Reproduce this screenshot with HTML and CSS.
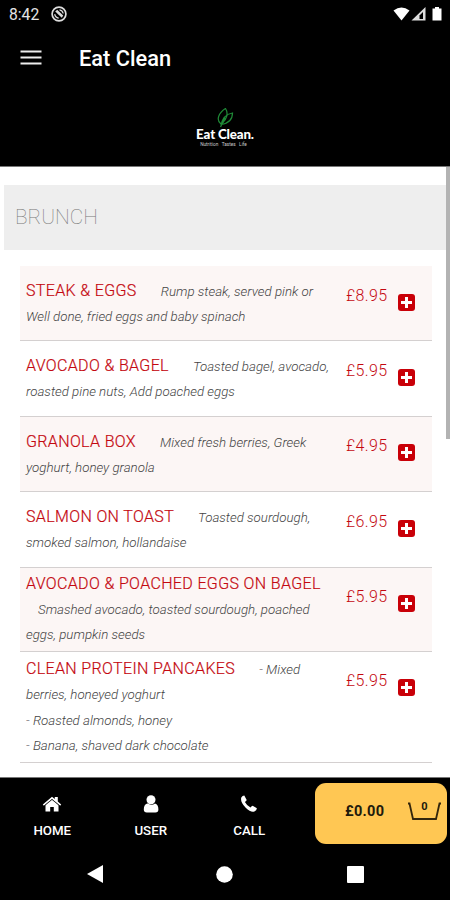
FILE: index.html
```html
<!DOCTYPE html>
<html lang="en">
<head>
  <meta charset="UTF-8">
  <title>Eat Clean</title>
  <link rel="stylesheet" href="styles.css">
</head>
<body>
  <div class="statusbar">
    <span class="time">8:42</span>
    <svg class="notify" width="16" height="16" viewBox="0 0 16 16">
      <circle cx="8" cy="8" r="6.9" fill="none" stroke="#ddd" stroke-width="1.700"/>
      <path d="M4.200 5.500l2-1.800 6 5.800-1.400 2.300z" fill="#ddd"/>
      <path d="M8.500 3.800q3 .3 3.700 3.700M3.700 8.200q.5 3.400 4 4" fill="none" stroke="#ddd" stroke-width="1.200"/>
    </svg>
    <svg class="signals" width="50" height="16" viewBox="0 0 50 16">
      <path d="M.5 4.500Q8.500-1.500 16.500 4.500L8.500 14.500z" fill="#fff"/>
      <path d="M18.500 14.500L32.500 1v13.500z" fill="#ddd"/>
      <path d="M26.500 13v-3.500l3.500-3.500v7z" fill="#000"/>
      <path d="M39.500 2.500h2.500V1h4v1.500h2.500v12h-9z" fill="#fff"/>
    </svg>
  </div>

  <header class="appbar">
    <svg width="22" height="16" viewBox="0 0 22 16">
      <path d="M.5 1.500h21M.5 7.500h21M.5 13.500h21" stroke="#eee" stroke-width="2.200"/>
    </svg>
    <h1 class="title">Eat Clean</h1>
  </header>

  <div class="brand">
    <svg width="20" height="21" viewBox="0 0 20 21" fill="none" stroke="#1f8a37" stroke-width="1.200">
      <path d="M6 16C.5 12 4 4.500 10.500 .5 13.500 5 12 11 7 15.500z"/>
      <path d="M6 18C7 10 11 6 17.500 5 17.500 12 13 15.500 6 16.500M5.500 19l4.500-9"/>
    </svg>
    <span class="brand-name">Eat Clean.</span>
    <span class="brand-sub">Nutrition&nbsp;&nbsp; Tastes&nbsp;&nbsp; Life</span>
  </div>

  <main class="content">
    <div class="scrollbar"></div>
    <h2 class="category">BRUNCH</h2>
    <ul class="menu">
      <li class="item">
        <p class="text"><span class="name">STEAK &amp; EGGS</span><span class="desc">Rump steak, served pink or<br>Well done, fried eggs and baby spinach</span></p>
        <span class="price">£8.95</span>
        <button class="add"></button>
      </li>
      <li class="item">
        <p class="text"><span class="name">AVOCADO &amp; BAGEL</span><span class="desc">Toasted bagel, avocado,<br>roasted pine nuts, Add poached eggs</span></p>
        <span class="price">£5.95</span>
        <button class="add"></button>
      </li>
      <li class="item">
        <p class="text"><span class="name">GRANOLA BOX</span><span class="desc">Mixed fresh berries, Greek<br>yoghurt, honey granola</span></p>
        <span class="price">£4.95</span>
        <button class="add"></button>
      </li>
      <li class="item">
        <p class="text"><span class="name">SALMON ON TOAST</span><span class="desc">Toasted sourdough,<br>smoked salmon, hollandaise</span></p>
        <span class="price">£6.95</span>
        <button class="add"></button>
      </li>
      <li class="item three">
        <p class="text"><span class="name">AVOCADO &amp; POACHED EGGS ON BAGEL</span><br><span class="desc">Smashed avocado, toasted sourdough, poached<br>eggs, pumpkin seeds</span></p>
        <span class="price">£5.95</span>
        <button class="add"></button>
      </li>
      <li class="item four">
        <p class="text"><span class="name">CLEAN PROTEIN PANCAKES</span><span class="desc">- Mixed<br>berries, honeyed yoghurt<br>- Roasted almonds, honey<br>- Banana, shaved dark chocolate</span></p>
        <span class="price">£5.95</span>
        <button class="add"></button>
      </li>
    </ul>
  </main>

  <footer class="tabs">
    <a class="tab">
      <svg width="20" height="18" viewBox="0 0 20 18" fill="#fff">
        <path d="M10 4.500l6.500 5.500v6.500h-4.700v-4.500H8.200v4.500H3.500V10z"/>
        <path d="M.8 9.500L10 1.800l2.800 2.300V2h3v4.600l3.400 2.900-1.100 1.200L10 4 1.900 10.700z"/>
        <path d="M2 11.100l8-6.600 8 6.600" fill="none" stroke="#000" stroke-width=".6"/>
      </svg>
      HOME
    </a>
    <a class="tab">
      <svg width="20" height="18" viewBox="0 0 20 18" fill="#fff">
        <path d="M6.200 8.500Q2.800 9.300 2.800 14.500q0 3 3 3h8.600q3 0 3-3 0-5.200-3.400-6-3.400 2.500-6.800 0z"/>
        <circle cx="10" cy="4.700" r="4.500"/>
      </svg>
      USER
    </a>
    <a class="tab">
      <svg width="20" height="18" viewBox="0 0 20 18" fill="#fff">
        <path d="M2.300 2.600Q3.400.7 5.300.6L7.700 5Q7.400 6 5.900 7q1.700 3.400 5.600 5.500 1.200-1.700 2.200-1.700l4.200 2.500q-.2 2.300-2.600 3.200-3.600 1.100-8.600-3.700Q1 7 2.300 2.600z"/>
      </svg>
      CALL
    </a>
    <div class="basket">
      <span class="total">£0.00</span>
      <span class="cart">
        <svg width="33" height="19" viewBox="0 0 33 19">
          <path d="M0 1.500h1.500l3.500 15.500h23l3.500-15.500H33" fill="none" stroke="#33260c" stroke-width="1.800"/>
        </svg>
        <b class="count">0</b>
      </span>
    </div>
  </footer>

  <nav class="sysnav">
    <svg width="16" height="18" viewBox="0 0 16 18"><path d="M0 9L16 0v18z" fill="#fff"/></svg>
    <svg width="17" height="17" viewBox="0 0 17 17"><circle cx="8.500" cy="8.500" r="8.300" fill="#fff"/></svg>
    <svg width="17" height="17" viewBox="0 0 17 17"><rect width="17" height="17" rx="1" fill="#fff"/></svg>
  </nav>
</body>
</html>
```
FILE: styles.css
```css
* {
  box-sizing: border-box;
}
body {
  display: flex;
  flex-direction: column;
  height: 900px;
  margin: 0;
  overflow: hidden;
  background: #000;
  color: #fff;
  font-family: Roboto, "Liberation Sans", sans-serif;
}
svg {
  display: block;
  flex: none;
}

.statusbar {
  display: flex;
  align-items: center;
  height: 28px;
  padding: 0 7px 0 9px;
}
.time {
  width: 42px;
  color: #e4e4e4;
  font-size: 15.700px;
}
.signals {
  margin-left: auto;
}

.appbar {
  display: flex;
  align-items: center;
  gap: 37px;
  height: 60px;
  padding-left: 20px;
}
.title {
  margin: 0;
  font-size: 21.800px;
  font-weight: 500;
}

.brand {
  display: flex;
  flex-direction: column;
  align-items: center;
  height: 77.500px;
  padding-top: 20px;
}
.brand-name {
  position: relative;
  margin-top: -2px;
  font: 900 13.300px/14px Lato, sans-serif;
  letter-spacing: -.15px;
}
.brand-sub {
  margin-right: 3px;
  font-size: 4.700px;
  line-height: 7px;
  color: #ccc;
  white-space: nowrap;
}

.content {
  position: relative;
  height: 612px;
  padding: 18px 4px 0;
  border-top: 1px solid #777;
  border-bottom: 1px solid #777;
  background: #fff;
}
.scrollbar {
  position: absolute;
  top: 0;
  right: 0;
  width: 4px;
  height: 272px;
  background: #b3b3b3;
}
.category {
  height: 65px;
  margin: 0 0 16.500px;
  padding-left: 11px;
  background: #eee;
  color: #777;
  font-size: 20.800px;
  font-weight: 100;
  line-height: 64px;
}

.menu {
  margin: 0;
  padding: 0 14px 0 16px;
  list-style: none;
}
.item {
  display: flex;
  align-items: center;
  height: 75.400px;
  padding-left: 6px;
  border-bottom: 1px solid #d4d0d0;
}
.item:nth-child(odd) {
  background: #fcf6f5;
}
.three {
  height: 84px;
}
.four {
  height: 111.400px;
}
.text {
  width: 320px;
  margin: 0;
  padding-top: 1.500px;
  font-size: 13.300px;
  line-height: 25.200px;
  white-space: nowrap;
}
.name {
  margin-right: 12px;
  color: #c40810;
  font-size: 16px;
  font-weight: 300;
  letter-spacing: .36px;
  line-height: 16px;
  -webkit-text-stroke: .2px #c40810;
}
.desc {
  margin-left: 12px;
  color: #444;
  font-style: italic;
  font-weight: 300;
}
.price {
  align-self: flex-start;
  width: 52px;
  padding-top: 19.500px;
  color: #c40810;
  font-size: 16px;
  font-weight: 300;
  letter-spacing: .4px;
}
.add {
  align-self: flex-start;
  width: 17px;
  height: 17px;
  margin-top: 27.500px;
  padding: 0;
  border: 0;
  border-radius: 3px;
  background:
    linear-gradient(#fff, #fff) center / 11px 3px no-repeat,
    linear-gradient(#fff, #fff) center / 3px 11px no-repeat,
    #c90008;
}

.tabs {
  display: flex;
  height: 71px;
  padding: 5px 3px 5px;
}
.tab {
  display: flex;
  flex-direction: column;
  align-items: center;
  gap: 10px;
  width: 98.500px;
  padding-top: 12px;
  font-size: 13.300px;
  font-weight: 500;
  line-height: 16px;
}
.basket {
  display: flex;
  align-items: center;
  width: 132px;
  height: 61px;
  margin-left: auto;
  padding-left: 30px;
  border-radius: 11px;
  background: #ffc753;
  color: #211a0c;
}
.total {
  width: 63px;
  padding-bottom: 4px;
  font-size: 14.500px;
  font-weight: 700;
  letter-spacing: .3px;
}
.cart {
  position: relative;
  padding-bottom: 4px;
}
.count {
  position: absolute;
  top: -2px;
  left: 0;
  right: 0;
  font-size: 11px;
  text-align: center;
}

.sysnav {
  display: flex;
  justify-content: space-between;
  align-items: center;
  height: 51px;
  padding: 0 86.500px;
}
```
